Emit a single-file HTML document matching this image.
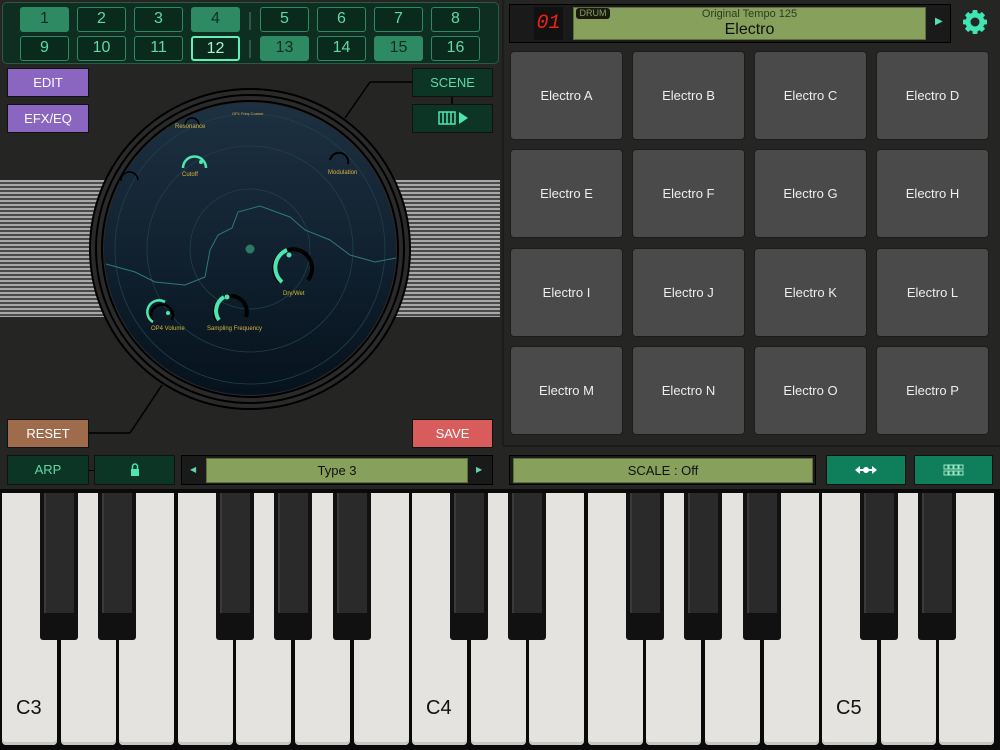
<!DOCTYPE html>
<html><head><meta charset="utf-8"><style>
*{margin:0;padding:0;box-sizing:border-box}
body{width:1000px;height:750px;background:#252523;position:relative;overflow:hidden;font-family:"Liberation Sans",sans-serif}
.a{position:absolute}
.ch{position:absolute;width:49px;height:25px;border:1.5px solid #2e8a63;border-radius:3px;background:#0b2a1e;color:#5fd9a3;font-size:16px;text-align:center;line-height:22px}
.ch.on{background:#2e8a63;color:#0e2e22}
.ch.sel{border:2px solid #5ff0b3;color:#a8f5d0}
.btn{position:absolute;color:#fff;font-size:13px;text-align:center;border:1px solid #111}
.pad{position:absolute;width:113px;height:89px;background:#4a4a4a;border:1.5px solid #1c1c1c;border-radius:4px;color:#eee;font-size:13px;text-align:center;line-height:87px}
.wk{position:absolute;top:493px;width:55px;height:252px;background:#e4e3df;border-radius:0 0 4px 4px;box-shadow:inset 0 -3px 0 #c8c7c2}
.bk{position:absolute;top:493px;width:38px;height:147px;background:#111;border-radius:0 0 3px 3px}
.bk::after{content:"";position:absolute;left:4px;right:4px;top:0;height:120px;background:#2a2a2a;border-left:2px solid #3a3a3a}
.lbl{position:absolute;bottom:25px;left:14px;font-size:20px;color:#111}
.kl{position:absolute;font-size:6px;color:#d7b43a;font-family:"Liberation Sans",sans-serif}
</style></head><body>
<div class="a" style="left:2px;top:2px;width:497px;height:62px;background:#0e2e22;border:1.5px solid #2a5a45;border-radius:5px"></div>
<div class="a" style="left:249px;top:12px;width:2px;height:18px;background:#2a5a45"></div>
<div class="a" style="left:249px;top:40px;width:2px;height:18px;background:#2a5a45"></div>
<div class="ch on" style="left:20px;top:7px">1</div><div class="ch" style="left:77px;top:7px">2</div><div class="ch" style="left:134px;top:7px">3</div><div class="ch on" style="left:191px;top:7px">4</div>
<div class="ch" style="left:260px;top:7px">5</div><div class="ch" style="left:317px;top:7px">6</div><div class="ch" style="left:374px;top:7px">7</div><div class="ch" style="left:431px;top:7px">8</div>
<div class="ch" style="left:20px;top:36px">9</div><div class="ch" style="left:77px;top:36px">10</div><div class="ch" style="left:134px;top:36px">11</div><div class="ch sel" style="left:191px;top:36px">12</div>
<div class="ch on" style="left:260px;top:36px">13</div><div class="ch" style="left:317px;top:36px">14</div><div class="ch on" style="left:374px;top:36px">15</div><div class="ch" style="left:431px;top:36px">16</div>
<div class="btn" style="left:7px;top:68px;width:82px;height:29px;background:#8a66c0;line-height:27px">EDIT</div>
<div class="btn" style="left:7px;top:104px;width:82px;height:29px;background:#8a66c0;line-height:27px">EFX/EQ</div>
<div class="btn" style="left:412px;top:68px;width:81px;height:29px;background:#0c3526;color:#5fd9a3;line-height:27px">SCENE</div>
<div class="btn" style="left:412px;top:104px;width:81px;height:29px;background:#0c3526"><svg width="81" height="27" viewBox="0 0 81 27"><rect x="26" y="7" width="16" height="12" fill="none" stroke="#4de6b0" stroke-width="1.5"/><g stroke="#4de6b0" stroke-width="1.5"><line x1="30" y1="7" x2="30" y2="19"/><line x1="34" y1="7" x2="34" y2="19"/><line x1="38" y1="7" x2="38" y2="19"/></g><path d="M46 7 L55 13 L46 19Z" fill="#4de6b0"/></svg></div>
<div class="btn" style="left:7px;top:419px;width:82px;height:29px;background:#9e6b4d;line-height:27px">RESET</div>
<div class="btn" style="left:412px;top:419px;width:81px;height:29px;background:#d95c5c;line-height:27px">SAVE</div>
<div class="a" style="left:0;top:180px;width:105px;height:137px;background:repeating-linear-gradient(#a8a8a8 0 2px,#4a4a4a 2px 4px)"></div>
<div class="a" style="left:395px;top:180px;width:105px;height:137px;background:repeating-linear-gradient(#a8a8a8 0 2px,#4a4a4a 2px 4px)"></div>
<svg class="a" style="left:0;top:0" width="500" height="450">
<line x1="345" y1="118" x2="370" y2="82" stroke="#000" stroke-width="1.5"/><line x1="370" y1="82" x2="412" y2="82" stroke="#000" stroke-width="1.5"/>
<line x1="452" y1="97" x2="452" y2="104" stroke="#000" stroke-width="1.5"/>
<line x1="162" y1="385" x2="130" y2="433" stroke="#000" stroke-width="1.5"/><line x1="89" y1="433" x2="130" y2="433" stroke="#000" stroke-width="1.5"/>
<circle cx="250" cy="249" r="160" fill="#2a2a2a" stroke="#000" stroke-width="2"/>
<circle cx="250" cy="249" r="154" fill="none" stroke="#000" stroke-width="2"/>
<circle cx="250" cy="249" r="148" fill="none" stroke="#000" stroke-width="2"/>
<defs><linearGradient id="g" x1="0" y1="0" x2="0" y2="1"><stop offset="0" stop-color="#1d3142"/><stop offset="1" stop-color="#06121d"/></linearGradient></defs>
<circle cx="250" cy="249" r="146" fill="url(#g)"/>
<g fill="none" stroke="#1f4048" stroke-width="0.8"><circle cx="250" cy="249" r="60"/><circle cx="250" cy="249" r="103"/><circle cx="250" cy="249" r="135"/></g>
<path d="M106 264 L135 272 L155 282 L185 285 L205 277 L210 250 L218 235 L232 228 L238 212 L260 206 L290 217 L305 230 L330 240 L350 255 L375 262 L396 258" fill="none" stroke="#2d7a78" stroke-width="1"/>
<circle cx="250" cy="249" r="4.5" fill="#2a7a64"/>
<g fill="none" stroke-width="4"><path d="M280 282 A19 19 0 1 1 308 280" stroke="#000"/><path d="M282 282 A19 19 0 0 1 287 250" stroke="#4de6b0"/>
<path d="M217 320 A16 16 0 1 1 246 317" stroke="#000"/><path d="M219 320 A16 16 0 0 1 224 297" stroke="#4de6b0"/>
<path d="M153 322 A11 11 0 1 1 172 320" stroke="#000" stroke-width="2.5"/><path d="M153 322 A11 11 0 0 1 165 302" stroke="#4de6b0" stroke-width="2.5"/>
<path d="M183 168 A11 11 0 1 1 206 168" stroke="#4de6b0" stroke-width="2.5"/>
<path d="M330 160 A9 9 0 1 1 348 164" stroke="#000" stroke-width="2"/>
<path d="M121 181 A8 8 0 1 1 138 180" stroke="#000" stroke-width="1.5"/>
<path d="M185 125 A7 7 0 1 1 199 125" stroke="#000" stroke-width="1.5"/></g>
<circle cx="289" cy="255" r="2.5" fill="#4de6b0"/><circle cx="227" cy="297" r="2.5" fill="#4de6b0"/><circle cx="168" cy="313" r="2" fill="#4de6b0"/><circle cx="201" cy="162" r="2" fill="#4de6b0"/>
</svg>
<div class="kl" style="left:283px;top:291px">Dry/Wet</div>
<div class="kl" style="left:207px;top:326px">Sampling Frequency</div>
<div class="kl" style="left:151px;top:326px">OP4 Volume</div>
<div class="kl" style="left:182px;top:172px">Cutoff</div>
<div class="kl" style="left:328px;top:170px">Modulation</div>
<div class="kl" style="left:175px;top:124px">Resonance</div>
<div class="kl" style="left:232px;top:111px;font-size:4px">OP1 Freq Coarse</div>
<div class="a" style="left:502px;top:0;width:2px;height:447px;background:#1c1c1c"></div>
<div class="a" style="left:509px;top:4px;width:442px;height:39px;background:#1a1a1a;border:1px solid #000"></div>
<div class="a" style="left:534px;top:7px;width:29px;height:33px;background:#111;color:#e21;font-family:'Liberation Mono',monospace;font-size:20px;font-style:italic;text-align:center;line-height:33px">0<span style="color:#e21">1</span></div>
<div class="a" style="left:573px;top:7px;width:353px;height:33px;background:#87a05c;border:1px solid #5b6e3c"></div>
<div class="a" style="left:576px;top:8px;width:34px;height:11px;background:#1a1a12;border-radius:3px;color:#87a05c;font-size:9px;text-align:center;line-height:11px">DRUM</div>
<div class="a" style="left:573px;top:8px;width:353px;text-align:center;font-size:11px;color:#2f3a20">Original Tempo 125</div>
<div class="a" style="left:573px;top:21px;width:353px;text-align:center;font-size:16px;color:#111">Electro</div>
<div class="a" style="left:935px;top:16px;color:#4de6b0;font-size:10px">&#9654;</div>
<svg class="a" style="left:961px;top:8px" width="28" height="28" viewBox="0 0 28 28"><g fill="#3fe6b4"><circle cx="14" cy="14" r="9.5"/><g><rect x="11.5" y="2" width="5" height="24" rx="1"/><rect x="11.5" y="2" width="5" height="24" rx="1" transform="rotate(45 14 14)"/><rect x="11.5" y="2" width="5" height="24" rx="1" transform="rotate(90 14 14)"/><rect x="11.5" y="2" width="5" height="24" rx="1" transform="rotate(135 14 14)"/></g></g><circle cx="14" cy="14" r="4.5" fill="#252523"/></svg>
<div class="pad" style="left:510px;top:51px">Electro A</div><div class="pad" style="left:632px;top:51px">Electro B</div><div class="pad" style="left:754px;top:51px">Electro C</div><div class="pad" style="left:876px;top:51px">Electro D</div>
<div class="pad" style="left:510px;top:149px">Electro E</div><div class="pad" style="left:632px;top:149px">Electro F</div><div class="pad" style="left:754px;top:149px">Electro G</div><div class="pad" style="left:876px;top:149px">Electro H</div>
<div class="pad" style="left:510px;top:248px">Electro I</div><div class="pad" style="left:632px;top:248px">Electro J</div><div class="pad" style="left:754px;top:248px">Electro K</div><div class="pad" style="left:876px;top:248px">Electro L</div>
<div class="pad" style="left:510px;top:346px">Electro M</div><div class="pad" style="left:632px;top:346px">Electro N</div><div class="pad" style="left:754px;top:346px">Electro O</div><div class="pad" style="left:876px;top:346px">Electro P</div>
<div class="a" style="left:504px;top:445px;width:496px;height:2px;background:#1a1a1a"></div>
<div class="btn" style="left:7px;top:455px;width:82px;height:30px;background:#0c3526;color:#5fd9a3;line-height:28px">ARP</div>
<div class="a" style="left:89px;top:470px;width:5px;height:1px;background:#000"></div>
<div class="btn" style="left:94px;top:455px;width:81px;height:30px;background:#0c3526"><svg width="79" height="28" viewBox="0 0 79 28"><rect x="36" y="13" width="8" height="7" fill="#4de6b0"/><path d="M37.5 13 V10.5 A2.5 2.5 0 0 1 42.5 10.5 V13" fill="none" stroke="#4de6b0" stroke-width="1.5"/></svg></div>
<div class="a" style="left:181px;top:455px;width:312px;height:30px;background:#1a1a1a;border:1px solid #000"></div>
<div class="a" style="left:190px;top:465px;color:#5fd9a3;font-size:8px">&#9664;</div>
<div class="a" style="left:476px;top:465px;color:#5fd9a3;font-size:8px">&#9654;</div>
<div class="a" style="left:206px;top:458px;width:262px;height:25px;background:#87a05c;border:1px solid #5b6e3c;text-align:center;line-height:23px;font-size:13px;color:#111">Type 3</div>
<div class="a" style="left:509px;top:455px;width:307px;height:30px;background:#1a1a1a;border:1px solid #000"></div>
<div class="a" style="left:513px;top:458px;width:300px;height:25px;background:#87a05c;border:1px solid #5b6e3c;text-align:center;line-height:23px;font-size:13px;color:#111">SCALE : Off</div>
<div class="btn" style="left:826px;top:455px;width:80px;height:30px;background:#0f7e5a"><svg width="78" height="28" viewBox="0 0 78 28"><g fill="#fff"><path d="M28 14 L33 10 V18Z"/><path d="M50 14 L45 10 V18Z"/><circle cx="39" cy="14" r="3"/><rect x="32" y="13" width="14" height="2"/></g></svg></div>
<div class="btn" style="left:914px;top:455px;width:79px;height:30px;background:#0f7e5a"><svg width="77" height="28" viewBox="0 0 77 28"><g fill="none" stroke="#9ee8c5" stroke-width="1"><rect x="29" y="9" width="4" height="4"/><rect x="34" y="9" width="4" height="4"/><rect x="39" y="9" width="4" height="4"/><rect x="44" y="9" width="4" height="4"/><rect x="29" y="15" width="4" height="4"/><rect x="34" y="15" width="4" height="4"/><rect x="39" y="15" width="4" height="4"/><rect x="44" y="15" width="4" height="4"/></g></svg></div>
<div class="a" style="left:0;top:489px;width:1000px;height:261px;background:#0a0a0a"></div>
<div class="wk" style="left:2px"><span class="lbl">C3</span></div><div class="wk" style="left:61px"></div><div class="wk" style="left:119px"></div><div class="wk" style="left:178px"></div><div class="wk" style="left:236px"></div><div class="wk" style="left:295px"></div><div class="wk" style="left:354px"></div>
<div class="wk" style="left:412px"><span class="lbl">C4</span></div><div class="wk" style="left:471px"></div><div class="wk" style="left:529px"></div><div class="wk" style="left:588px"></div><div class="wk" style="left:646px"></div><div class="wk" style="left:705px"></div><div class="wk" style="left:764px"></div>
<div class="wk" style="left:822px"><span class="lbl">C5</span></div><div class="wk" style="left:881px"></div><div class="wk" style="left:939px"></div>
<div class="bk" style="left:40px"></div><div class="bk" style="left:98px"></div><div class="bk" style="left:216px"></div><div class="bk" style="left:274px"></div><div class="bk" style="left:333px"></div>
<div class="bk" style="left:450px"></div><div class="bk" style="left:508px"></div><div class="bk" style="left:626px"></div><div class="bk" style="left:684px"></div><div class="bk" style="left:743px"></div>
<div class="bk" style="left:860px"></div><div class="bk" style="left:918px"></div>
</body></html>
